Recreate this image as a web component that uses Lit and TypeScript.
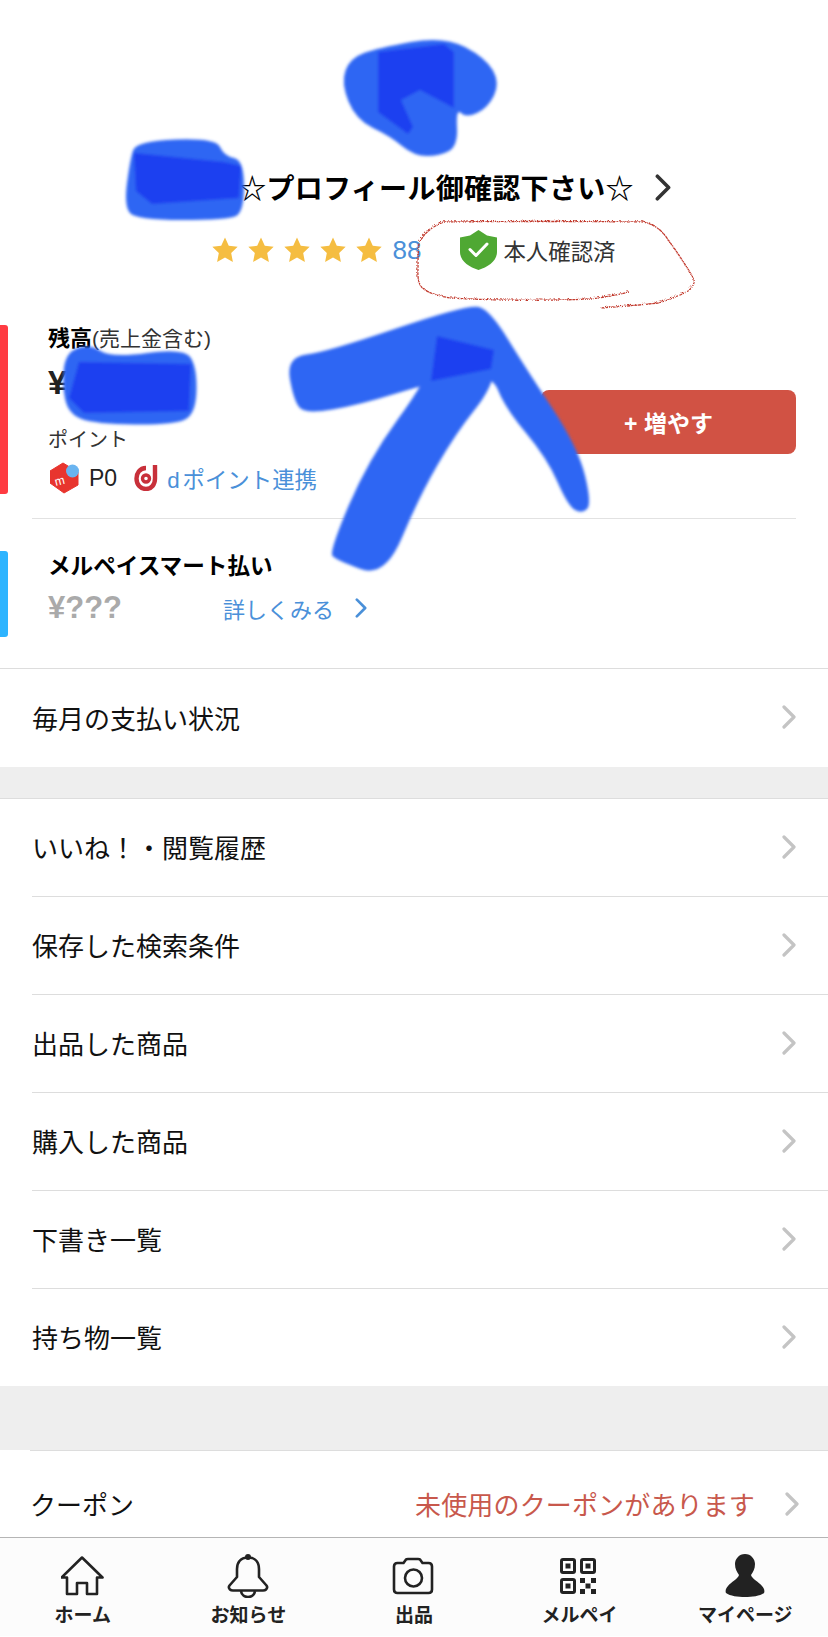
import { LitElement, html, css, svg } from "lit";
import { customElement } from "lit/decorators.js";

const LIGHT = "#2f66f3";
const DARK = "#1a3ff0";

// the wide brush strokes of the scribbles, rounded off by smooth()
const strokes = [
  "378,48 444,36 486,58 500,83 488,108 466,118 456,108 458,146 440,156 414,156 390,136 356,120 341,83 350,58",
  "136,141 216,138 224,156 244,160 244,212 228,220 136,220 124,206 130,160",
  "66,352 90,344 111,358 184,348 197,367 196,414 174,425 95,424 68,414 62,383",
  "286,357 327,352 468,304 490,310 525,367 578,447 592,504 582,514 568,506 547,458 505,408 491,372 433,382 359,405 306,414 294,402",
  "438,338 496,350 493,387 456,433 419,497 385,578 336,560 329,552 368,460 428,378",
];

// where two strokes overlap the blue is darker, and the edges stay straight
const overlaps = [
  "378,52 444,44 454,52 454,108 420,90 401,100 413,127 408,134 378,112",
  "134,153 224,162 241,166 239,198 152,204 136,191",
  "79,362 191,364 189,411 84,413 69,398",
  "437,336 494,350 491,369 431,381",
];

// closes a point list into a rounded outline, so a scribble has no hard corners
const smooth = (points: string) => {
  const p = points.split(" ").map((s) => s.split(",").map(Number));
  const mid = (a: number[], b: number[]) => `${(a[0] + b[0]) / 2} ${(a[1] + b[1]) / 2}`;
  let d = `M${mid(p[p.length - 1], p[0])}`;
  p.forEach((pt, i) => {
    d += `Q${pt[0]} ${pt[1]} ${mid(pt, p[(i + 1) % p.length])}`;
  });
  return d + "Z";
};

const menu = ["いいね！・閲覧履歴", "保存した検索条件", "出品した商品", "購入した商品", "下書き一覧", "持ち物一覧"];

const chevron = (cls: string) => html`<svg class=${cls} viewBox="0 0 14 24"><path d="M2 2l10 10L2 22" fill="none" stroke="currentColor" stroke-width="3.2" stroke-linecap="round" stroke-linejoin="round"/></svg>`;

const star = html`<svg class="star" viewBox="0 0 24 24"><path d="M12 0.5l3.5 7.6 8.2 1-6 5.7 1.6 8.2L12 19l-7.3 4 1.6-8.2-6-5.7 8.2-1z" fill="#f5bd41"/></svg>`;

const tabs = [
  {
    label: "ホーム",
    icon: svg`<path d="M21 3.5L41.5 23.5H36V40H26V29H16V40H6V23.5H0.5Z" fill="none" stroke="#222" stroke-width="2.6" stroke-linejoin="round"/>`,
  },
  {
    label: "お知らせ",
    icon: svg`<circle cx="22" cy="3" r="3" fill="#222"/><path d="M22 3.5C14 3.5 11 9 11 15V23L3.5 31.5Q2 33.5 4 35.5Q5 36.5 7 36.5H37Q39 36.5 40 35.5Q42 33.5 40.5 31.5L33 23V15C33 9 30 3.5 22 3.5Z" fill="none" stroke="#222" stroke-width="2.6" stroke-linejoin="round"/><path d="M15 37C16 45 28 45 29 37" fill="none" stroke="#222" stroke-width="2.6"/>`,
  },
  {
    label: "出品",
    icon: svg`<path d="M5.5 9H11.5L14 5.5Q14.5 5 16 5H26Q27.5 5 28 5.5L30.5 9H36.5Q40 9 40 12.500V35.500Q40 39 36.500 39H5.500Q2 39 2 35.500V12.500Q2 9 5.500 9Z" fill="none" stroke="#222" stroke-width="2.6" stroke-linejoin="round"/><circle cx="21.500" cy="24" r="8.500" fill="none" stroke="#222" stroke-width="2.600"/>`,
  },
  {
    label: "メルペイ",
    icon: svg`<g fill="none" stroke="#222" stroke-width="3"><rect x="3.500" y="5.500" width="13" height="13" rx="1.500"/><rect x="23.500" y="5.500" width="13" height="13" rx="1.500"/><rect x="3.500" y="25.500" width="13" height="13" rx="1.500"/></g><g fill="#222"><rect x="7.500" y="9.500" width="5" height="5"/><rect x="27.500" y="9.500" width="5" height="5"/><rect x="7.500" y="29.500" width="5" height="5"/><rect x="22" y="24" width="5" height="5"/><rect x="33" y="24" width="5" height="5"/><rect x="27.500" y="29.500" width="5" height="5"/><rect x="22" y="35" width="5" height="5"/><rect x="33" y="35" width="5" height="5"/></g>`,
  },
  {
    label: "マイページ",
    icon: svg`<path d="M22 0C28 0 32 5 32 10C32 15 30 18 28 21C29 25 36 28 39 32C41 34 42 37 41 39C37 42 29 43 22 43C15 43 7 42 3 39C2 37 3 34 5 32C8 28 15 25 16 21C14 18 12 15 12 10C12 5 16 0 22 0Z" fill="#222"/>`,
  },
];

@customElement("app-root")
export class AppRoot extends LitElement {
  static styles = css`
    :host {
      display: flex;
      flex-direction: column;
      position: relative;
      height: 1637px;
      overflow: hidden;
      background: #fff;
      color: #000;
      font-family: "Liberation Sans", "Noto Sans CJK JP", sans-serif;
    }
    .profile {
      height: 325px;
      padding-top: 167px;
      box-sizing: border-box;
    }
    .title {
      display: flex;
      justify-content: center;
      align-items: center;
      height: 40px;
      font-size: 28px;
      font-weight: 700;
      letter-spacing: 0.3px;
      white-space: nowrap;
    }
    .name {
      width: 81px;
    }
    .title-arrow {
      width: 16px;
      height: 27px;
      margin-left: 21px;
      color: #333;
    }
    .rating {
      display: flex;
      justify-content: center;
      align-items: center;
      height: 40px;
      margin-top: 23px;
    }
    .star {
      width: 26px;
      height: 26px;
      margin-left: -1px;
      margin-right: 11px;
    }
    .count {
      font-size: 26px;
      color: #4a90d9;
    }
    .shield {
      width: 37px;
      height: 40px;
      margin-left: 39px;
      margin-right: 6px;
    }
    .verified {
      font-size: 22.4px;
      color: #333;
    }
    .balance {
      display: flex;
      height: 169px;
    }
    .bar {
      width: 8px;
      border-radius: 0 3px 3px 0;
      background: #ff3b42;
    }
    .bar.blue {
      background: #2db4ff;
    }
    .balance-body {
      margin-left: 40px;
    }
    .balance-label {
      font-size: 22px;
      font-weight: 700;
      line-height: 28px;
      white-space: nowrap;
    }
    .balance-label span {
      font-size: 21px;
      font-weight: 400;
      color: #333;
    }
    .yen {
      margin-top: 7px;
      font-size: 34px;
      font-weight: 700;
      line-height: 44px;
      color: #222;
    }
    .point-label {
      margin-top: 22px;
      font-size: 20px;
      line-height: 28px;
      color: #333;
    }
    .points {
      display: flex;
      align-items: center;
      height: 32px;
      margin-top: 8px;
      white-space: nowrap;
    }
    .mercari {
      width: 30px;
      height: 32px;
      margin-left: 2px;
    }
    .p0 {
      margin-left: 9px;
      font-size: 23px;
      color: #222;
    }
    .dicon {
      width: 24px;
      height: 26px;
      margin-left: 17px;
    }
    .dlink {
      margin-left: 9px;
      font-size: 22.4px;
      color: #4a90d9;
    }
    .dlink span {
      margin-right: 3px;
    }
    .add {
      width: 255px;
      height: 64px;
      margin: 65px 32px 0 auto;
      border-radius: 8px;
      background: #d15244;
      color: #fff;
      font-size: 23px;
      font-weight: 700;
      display: flex;
      align-items: center;
      justify-content: center;
    }
    .divider {
      height: 1px;
      margin: 24px 32px 32px;
      background: #e2e2e2;
    }
    .smart {
      display: flex;
      height: 86px;
      margin-bottom: 31px;
    }
    .smart-body {
      margin-left: 40px;
    }
    .smart-title {
      font-size: 22.6px;
      font-weight: 700;
      line-height: 32px;
      white-space: nowrap;
    }
    .smart-row {
      display: flex;
      align-items: center;
      height: 44px;
      margin-top: 3px;
    }
    .unknown {
      width: 175px;
      font-size: 31px;
      font-weight: 700;
      color: #aaa;
    }
    .more {
      font-size: 22px;
      color: #4a90d9;
    }
    .more-arrow {
      width: 12px;
      height: 20px;
      margin-left: 21px;
      color: #4a90d9;
    }
    .row {
      display: flex;
      align-items: center;
      justify-content: space-between;
      box-sizing: border-box;
      height: 98px;
      padding-right: 32px;
      padding-bottom: 2px;
      border-top: 1px solid #ddd;
      margin-left: 32px;
      font-size: 26px;
      color: #111;
    }
    .row.full {
      margin-left: 0;
      padding-left: 32px;
      height: 99px;
    }
    .row-arrow {
      width: 14px;
      height: 24px;
      color: #c4c4c4;
    }
    .gap {
      height: 31px;
      background: #eee;
    }
    .gap.big {
      height: 64px;
    }
    .coupon {
      height: 87px;
      margin-left: 30px;
      padding: 19px 29px 0 0;
    }
    .coupon-note {
      margin-left: auto;
      margin-right: 30px;
      letter-spacing: 0.15px;
      color: #c8584c;
    }
    .tabbar {
      display: grid;
      grid-template-columns: repeat(5, 1fr);
      box-sizing: border-box;
      height: 99px;
      border-top: 1px solid #b5b5b5;
      background: #fcfcfc;
    }
    .tab {
      display: flex;
      flex-direction: column;
      align-items: center;
      padding-top: 16px;
      font-size: 19px;
      font-weight: 700;
      color: #222;
    }
    .tab svg {
      width: 44px;
      height: 44px;
    }
    .tab span {
      margin-top: 5px;
      line-height: 26px;
      white-space: nowrap;
    }
    .marks {
      position: absolute;
      left: 0;
      top: 0;
      width: 828px;
      height: 1637px;
      pointer-events: none;
    }
  `;

  render() {
    return html`
      <section class="profile">
        <div class="title">
          <span class="name"></span>
          <span>☆プロフィール御確認下さい☆</span>
          ${chevron("title-arrow")}
        </div>
        <div class="rating">
          ${star}${star}${star}${star}${star}
          <span class="count">88</span>
          <svg class="shield" viewBox="0 0 37 40">
            <path d="M18.5 0L27 5.5L37 7.5V22C37 31 28 37 18.5 40C9 37 0 31 0 22V7.5L10 5.5Z" fill="#4fa833"/>
            <path d="M10 19.5L16 25.5L27 14" fill="none" stroke="#fff" stroke-width="3" stroke-linecap="round" stroke-linejoin="round"/>
          </svg>
          <span class="verified">本人確認済</span>
        </div>
      </section>

      <section class="balance">
        <div class="bar"></div>
        <div class="balance-body">
          <div class="balance-label">残高<span>(売上金含む)</span></div>
          <div class="yen">¥</div>
          <div class="point-label">ポイント</div>
          <div class="points">
            <svg class="mercari" viewBox="0 0 30 32">
              <path d="M13 1L0 9V21L14 31L28 23V10Z" fill="#e8352e" stroke="#e8352e" stroke-width="1" stroke-linejoin="round"/>
              <circle cx="22.500" cy="9" r="6.500" fill="#6ab4f0"/>
              <text x="5" y="23" font-size="12" fill="#fff" font-family="Liberation Sans" transform="rotate(-14 9 20)">m</text>
            </svg>
            <span class="p0">P0</span>
            <svg class="dicon" viewBox="0 0 24 26">
              <path d="M12 3C5.500 3 2.500 8.500 2.500 13.500C2.500 20 7 24 12 24C17.500 24 21 19.500 21 13.500V0" fill="none" stroke="#c8303a" stroke-width="4.400"/>
              <circle cx="12" cy="13.500" r="3.500" fill="none" stroke="#c8303a" stroke-width="3.400"/>
            </svg>
            <span class="dlink"><span>d</span>ポイント連携</span>
          </div>
        </div>
        <div class="add">+ 増やす</div>
      </section>

      <div class="divider"></div>

      <section class="smart">
        <div class="bar blue"></div>
        <div class="smart-body">
          <div class="smart-title">メルペイスマート払い</div>
          <div class="smart-row">
            <span class="unknown">¥???</span>
            <span class="more">詳しくみる</span>
            ${chevron("more-arrow")}
          </div>
        </div>
      </section>

      <div class="row full"><span>毎月の支払い状況</span>${chevron("row-arrow")}</div>
      <div class="gap"></div>
      <div class="row full" style="height:1px;padding:0"></div>
      ${menu.map(
        (label, i) => html`
          <div class="row" style=${i == 0 ? "border-top:none;height:97px" : ""}>
            <span>${label}</span>${chevron("row-arrow")}
          </div>
        `
      )}
      <div class="gap big"></div>
      <div class="row coupon">
        <span>クーポン</span>
        <span class="coupon-note">未使用のクーポンがあります</span>
        ${chevron("row-arrow")}
      </div>

      <nav class="tabbar">
        ${tabs.map(
          (tab) => html`
            <div class="tab">
              <svg viewBox="0 0 44 44">${tab.icon}</svg>
              <span>${tab.label}</span>
            </div>
          `
        )}
      </nav>

      <svg class="marks" viewBox="0 0 828 1637">
        <defs>
          <filter id="soft" x="-10%" y="-10%" width="120%" height="120%">
            <feGaussianBlur stdDeviation="1.8"></feGaussianBlur>
          </filter>
          <filter id="rough" x="-5%" y="-5%" width="110%" height="110%">
            <feTurbulence baseFrequency="0.5" numOctaves="2" seed="3"></feTurbulence>
            <feDisplacementMap in="SourceGraphic" scale="2"></feDisplacementMap>
          </filter>
        </defs>
        <g filter="url(#soft)">
          ${strokes.map((points) => svg`<path d=${smooth(points)} fill=${LIGHT}></path>`)}
          ${overlaps.map((points) => svg`<polygon points=${points} fill=${DARK}></polygon>`)}
        </g>
        <path filter="url(#rough)" d="M628 291Q607 296 590 298Q517 301 450 297Q430 294 423 288Q416 284 417 268Q417 250 418 243Q424 228 443 221Q540 220 643 221Q655 224 663 233Q680 256 693 278Q694 285 687 290Q672 298 657 302Q630 305 600 307" fill="none" stroke="#c23a2e" stroke-width="1.300" stroke-dasharray="3 0.6" stroke-linejoin="round"></path>
      </svg>
    `;
  }
}
